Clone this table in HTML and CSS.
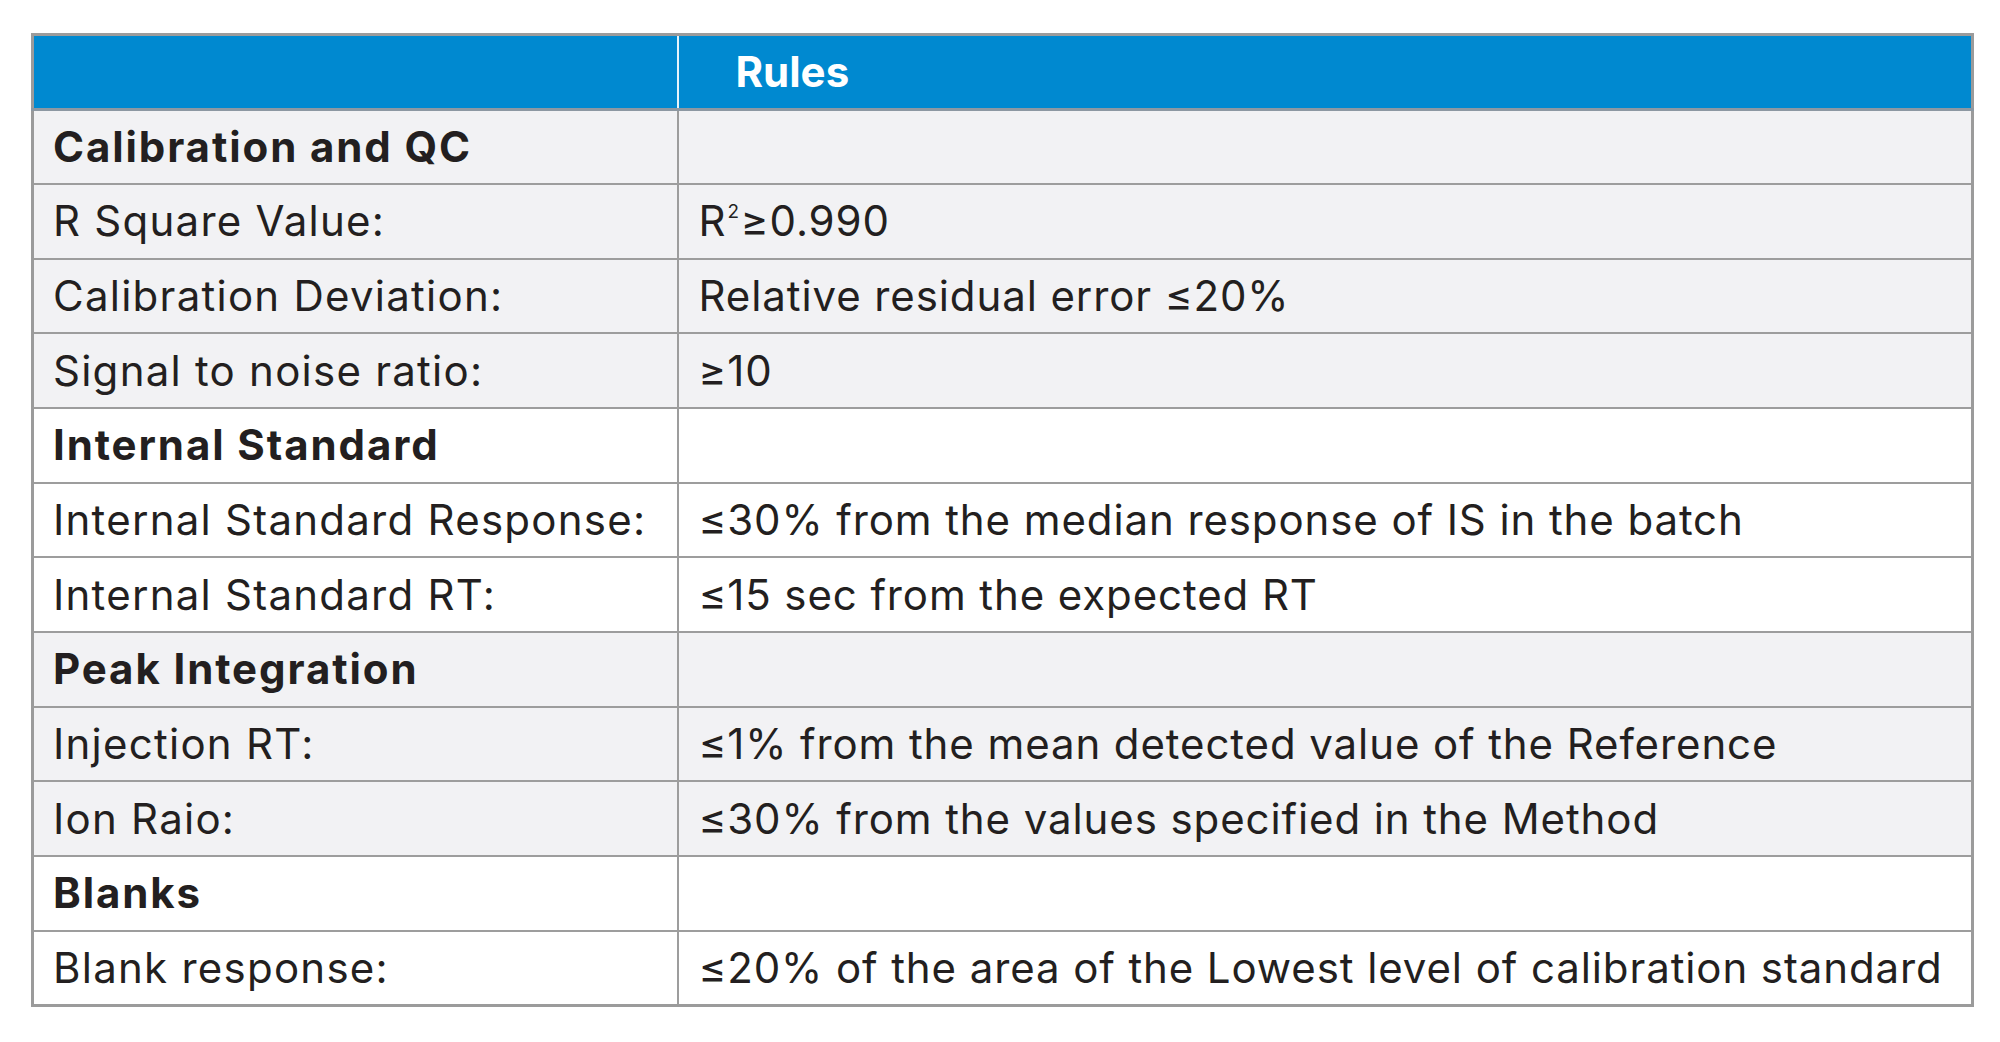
FILE: index.html
```html
<!DOCTYPE html>
<html lang="en">
<head>
<meta charset="utf-8">
<title>Rules</title>
<link rel="stylesheet" href="styles.css">
</head>
<body>
<table class="rules">
  <colgroup><col class="c1"><col class="c2"></colgroup>
  <thead>
    <tr class="head"><th class="h1"></th><th class="h2">Rules</th></tr>
  </thead>
  <tbody>
    <tr class="grey sec"><td>Calibration and QC</td><td></td></tr>
    <tr class="grey"><td>R Square Value:</td><td>R<sup>2</sup>≥0.990</td></tr>
    <tr class="grey"><td>Calibration Deviation:</td><td>Relative residual error ≤20%</td></tr>
    <tr class="grey"><td>Signal to noise ratio:</td><td>≥10</td></tr>
    <tr class="white sec"><td>Internal Standard</td><td></td></tr>
    <tr class="white"><td>Internal Standard Response:</td><td>≤30% from the median response of IS in the batch</td></tr>
    <tr class="white"><td>Internal Standard RT:</td><td>≤15 sec from the expected RT</td></tr>
    <tr class="grey sec"><td>Peak Integration</td><td></td></tr>
    <tr class="grey"><td>Injection RT:</td><td>≤1% from the mean detected value of the Reference</td></tr>
    <tr class="grey"><td>Ion Raio:</td><td>≤30% from the values specified in the Method</td></tr>
    <tr class="white sec"><td>Blanks</td><td></td></tr>
    <tr class="white"><td>Blank response:</td><td>≤20% of the area of the Lowest level of calibration standard</td></tr>
  </tbody>
</table>
</body>
</html>
```

FILE: styles.css
```css
html, body {
  margin: 0;
  padding: 0;
  background: #ffffff;
}

body {
  padding: 33px 0 0 31px;
  font-family: Inter, "Liberation Sans", Arial, sans-serif;
  color: #231f20;
}

.rules {
  border-collapse: collapse;
  width: 1943px;
  table-layout: fixed;
  border: 3px solid #9b9b9b;
  font-size: 42px;
  line-height: 1;
}

.c1 { width: 645px; }

.rules th,
.rules td {
  height: 74.7px;
  padding: 0 0 0 20px;
  text-align: left;
  vertical-align: middle;
  border: 2px solid #9d9d9d;
  white-space: nowrap;
  box-sizing: border-box;
  letter-spacing: 0.9px;
}

.rules tr > *:first-child {
  padding-left: 19px;
  letter-spacing: 1.25px;
}

.head th {
  background: #0089d0;
  color: #ffffff;
  font-weight: 700;
  letter-spacing: 0;
  border-top: 3px solid #9b9b9b;
  border-bottom: 3px solid #8d98a2;
}

.head .h1 { border-right: 2px solid #e6f3fb; }
.head .h2 { padding-left: 57px; border-left: 2px solid #e6f3fb; }

.grey td { background: #f2f2f4; }
.white td { background: #ffffff; }

.sec td:first-child {
  font-weight: 700;
  letter-spacing: 1.9px;
}

sup {
  font-size: 0.45em;
  vertical-align: 0.95em;
  line-height: 0;
  margin: 0 1px 0 1px;
}
```
